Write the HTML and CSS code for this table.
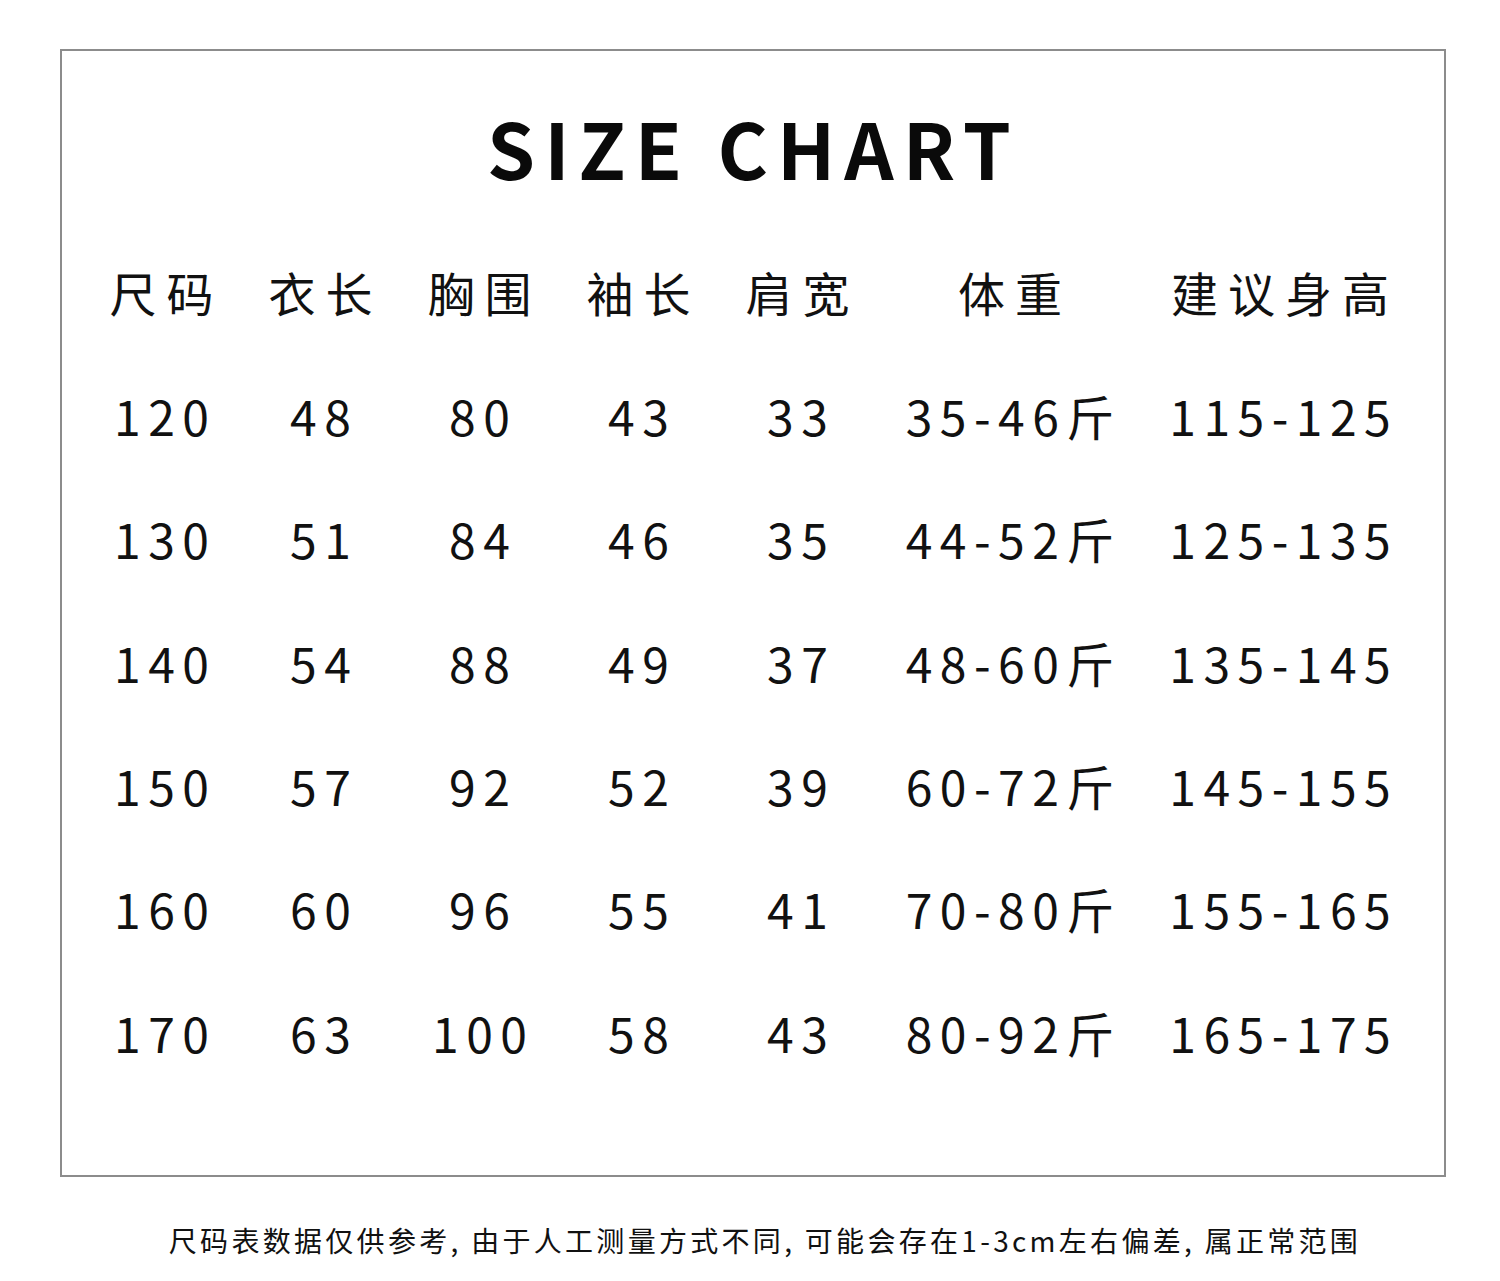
FILE: index.html
```html
<!DOCTYPE html>
<html lang="zh">
<head>
<meta charset="utf-8">
<title>Size Chart</title>
<link rel="stylesheet" href="styles.css">
</head>
<body>
<div class="page">
  <div class="frame">
    <h1 class="title">SIZE CHART</h1>
    <div class="chart">
      <div class="row head">
        <span>尺码</span><span>衣长</span><span>胸围</span><span>袖长</span><span>肩宽</span><span>体重</span><span>建议身高</span>
      </div>
      <div class="row">
        <span>120</span><span>48</span><span>80</span><span>43</span><span>33</span><span>35-46斤</span><span>115-125</span>
      </div>
      <div class="row">
        <span>130</span><span>51</span><span>84</span><span>46</span><span>35</span><span>44-52斤</span><span>125-135</span>
      </div>
      <div class="row">
        <span>140</span><span>54</span><span>88</span><span>49</span><span>37</span><span>48-60斤</span><span>135-145</span>
      </div>
      <div class="row">
        <span>150</span><span>57</span><span>92</span><span>52</span><span>39</span><span>60-72斤</span><span>145-155</span>
      </div>
      <div class="row">
        <span>160</span><span>60</span><span>96</span><span>55</span><span>41</span><span>70-80斤</span><span>155-165</span>
      </div>
      <div class="row">
        <span>170</span><span>63</span><span>100</span><span>58</span><span>43</span><span>80-92斤</span><span>165-175</span>
      </div>
    </div>
  </div>
  <p class="note">尺码表数据仅供参考, 由于人工测量方式不同, 可能会存在1-3cm左右偏差, 属正常范围</p>
</div>
</body>
</html>
```
FILE: styles.css
```css
html, body {
  margin: 0;
  padding: 0;
  background: #ffffff;
}
body {
  font-family: "Noto Sans CJK SC", "Noto Sans", sans-serif;
  color: #111111;
}
.page {
  width: 1500px;
  height: 1281px;
  padding-top: 49px;
  box-sizing: border-box;
}
.frame {
  margin-left: 60px;
  width: 1386px;
  height: 1128px;
  box-sizing: border-box;
  border: 2px solid #8c8c8c;
  padding: 0 0 0 20px;
}
.title {
  margin: 46px 0 0 -20px;
  height: 100px;
  line-height: 100px;
  font-size: 77px;
  font-weight: 700;
  letter-spacing: 9px;
  text-align: center;
  padding-left: 1px;
  color: #0a0a0a;
}
.chart {
  margin-top: 34px;
  display: flex;
  flex-direction: column;
}
.row {
  display: grid;
  grid-template-columns: 159px 159px 159px 159px 159px 266px 274px;
  height: 123.3px;
  align-items: center;
  font-size: 48px;
  letter-spacing: 7.5px;
}
.row span {
  text-align: center;
  padding-left: 7.5px;
  line-height: 1.2;
}
.head {
  font-size: 47px;
  letter-spacing: 10px;
}
.head span {
  padding-left: 10px;
}
.note {
  margin: 47px 0 0 0;
  padding-left: 30px;
  text-align: center;
  font-size: 28px;
  letter-spacing: 3.3px;
  line-height: 1.2;
  color: #111111;
}
```
